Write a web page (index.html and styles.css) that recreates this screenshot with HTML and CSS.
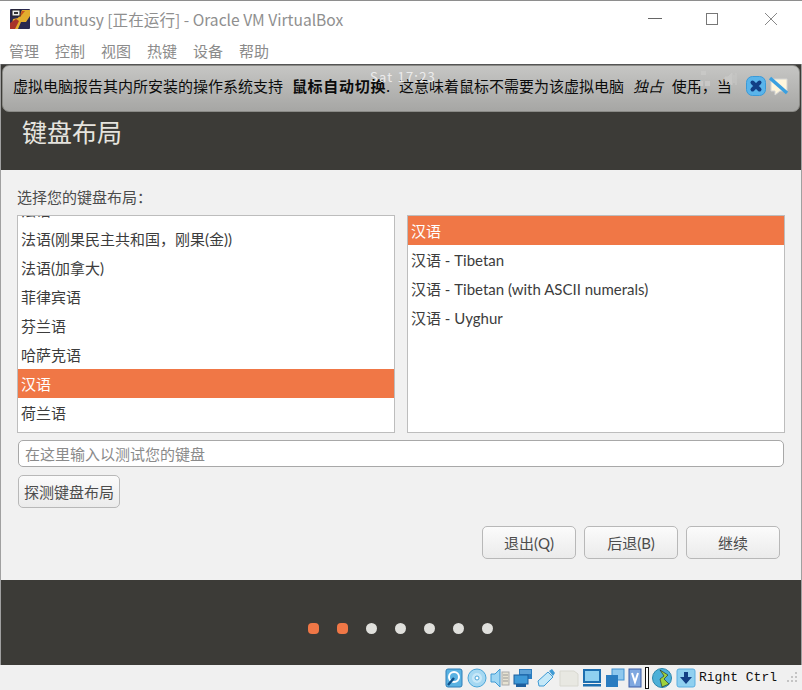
FILE: index.html
```html
<!DOCTYPE html>
<html lang="zh">
<head>
<meta charset="utf-8">
<title>ubuntusy</title>
<link rel="stylesheet" href="styles.css">
</head>
<body>
<div class="window">
  <header class="titlebar">
    <svg class="app-icon" width="20" height="20" viewBox="0 0 20 20">
      <rect width="20" height="20" rx="1" fill="#2a2950"/>
      <path d="M20 1 L12 1 Q10 6 8 9 L3 10 L1 20 L8 20 L11 13 L16 13 L20 7Z" fill="#e3ad2e"/>
      <path d="M0 14 L6 10 L9 12 L5 20 L0 20Z" fill="#a8332a"/>
      <path d="M12 2 L15 2 L10 8 L9 8Z" fill="#c9541e"/>
      <rect x="2" y="1" width="8" height="6" fill="#eee" stroke="#222"/>
      <rect x="4" y="3" width="4" height="2" fill="#333"/>
    </svg>
    <span class="title">ubuntusy [正在运行] - Oracle VM VirtualBox</span>
    <div class="winctl">
      <svg class="win-min" width="14" height="14" viewBox="0 0 14 14"><path d="M0 6.5H14" stroke="#666" fill="none"/></svg>
      <svg width="14" height="14" viewBox="0 0 14 14"><rect x="1.5" y="1.5" width="11" height="11" stroke="#777" fill="none"/></svg>
      <svg width="14" height="14" viewBox="0 0 14 14"><path d="M1 1L13 13M13 1L1 13" stroke="#888" fill="none"/></svg>
    </div>
  </header>
  <nav class="menubar">
    <span>管理</span><span>控制</span><span>视图</span><span>热键</span><span>设备</span><span>帮助</span>
  </nav>
  <main class="guest">
    <div class="guest-top">
      <h1>键盘布局</h1>
    </div>
    <div class="notice">
      <span class="notice-text">虚拟电脑报告其内所安装的操作系统支持 <b>鼠标自动切换</b>. 这意味着鼠标不需要为该虚拟电脑 <i>独占</i> 使用，当</span>
      <span class="panel-ghost clock">Sat 17:23</span>
      <svg class="ghost-net" width="14" height="18" viewBox="0 0 14 18"><path d="M4 1H9V5H4ZM1 11H6V16H1ZM8 11H13V16H8Z" fill="#c8c8c6"/></svg>
      <svg class="ghost-snd" width="14" height="14" viewBox="0 0 14 14"><path d="M1 5H4L8 1V13L4 9H1ZM10 3V11M12 1V13" stroke="#c8c8c6" fill="#c8c8c6"/></svg>
      <svg class="close-ico" width="20" height="20" viewBox="0 0 20 20">
        <rect x="0.5" y="0.5" width="19" height="19" rx="6" fill="#5ab4ea" stroke="#3a9ad8"/>
        <path d="M6.5 6.5L13.5 13.5M13.5 6.5L6.5 13.5" stroke="#123f86" stroke-width="4" stroke-linecap="round"/>
      </svg>
      <svg class="nomouse-ico" width="20" height="20" viewBox="0 0 20 20">
        <path d="M2 3H18V15H11L6 19V15H2Z" fill="#fff6dc" stroke="#d4d4d4"/>
        <path d="M1 2L18 17" stroke="#3aa0e0" stroke-width="3.4"/>
      </svg>
    </div>
    <section class="content">
      <label class="prompt">选择您的键盘布局：</label>
      <div class="lists">
        <ul class="list list-left">
          <li>法语</li>
          <li>法语(刚果民主共和国，刚果(金))</li>
          <li>法语(加拿大)</li>
          <li>菲律宾语</li>
          <li>芬兰语</li>
          <li>哈萨克语</li>
          <li class="sel">汉语</li>
          <li>荷兰语</li>
        </ul>
        <ul class="list list-right">
          <li class="sel">汉语</li>
          <li>汉语 - Tibetan</li>
          <li>汉语 - Tibetan (with ASCII numerals)</li>
          <li>汉语 - Uyghur</li>
        </ul>
      </div>
      <div class="testinput">在这里输入以测试您的键盘</div>
      <div class="detect-row"><button class="btn detect">探测键盘布局</button></div>
      <div class="actions">
        <button class="btn act">退出(Q)</button>
        <button class="btn act">后退(B)</button>
        <button class="btn act">继续</button>
      </div>
    </section>
    <footer class="progress">
      <i class="dot on"></i><i class="dot on"></i><i class="dot"></i><i class="dot"></i><i class="dot"></i><i class="dot"></i><i class="dot"></i>
    </footer>
  </main>
  <div class="statusbar">
    <svg width="20" height="20" viewBox="0 0 20 20"><rect x="2" y="1" width="16" height="18" rx="2" fill="#5ab2e2" stroke="#2f7fb8"/><circle cx="10" cy="9" r="5" fill="none" stroke="#fff" stroke-width="2"/><path d="M4 17L10 10" stroke="#0d4f88" stroke-width="2.4"/></svg>
    <svg width="20" height="20" viewBox="0 0 20 20"><circle cx="10" cy="10" r="9" fill="#a5d8f2" stroke="#4aa5d8"/><circle cx="10" cy="10" r="5" fill="#c8e8f8"/><circle cx="10" cy="10" r="2" fill="#fff" stroke="#4aa5d8"/></svg>
    <svg width="20" height="20" viewBox="0 0 20 20"><path d="M1 6H5L10 1V19L5 14H1Z" fill="#9fd6f3" stroke="#3f9ad4"/><rect x="12" y="4" width="7" height="13" fill="#e6e2d2" stroke="#aaa"/><path d="M13 7H18M13 10H18M13 13H18" stroke="#999"/></svg>
    <svg width="20" height="20" viewBox="0 0 20 20"><rect x="6" y="1" width="13" height="10" fill="#2a7cc0"/><path d="M7 3H18M7 5H18" stroke="#8fc8ee"/><rect x="1" y="7" width="14" height="9" fill="#3f9ad8" stroke="#1d5f9e"/><rect x="3" y="16" width="10" height="3" fill="#1d5f9e"/></svg>
    <svg width="20" height="20" viewBox="0 0 20 20"><path d="M2 13L12 4L17 9L8 18L3 18Z" fill="#c4e8f8" stroke="#3f9ad4"/><path d="M13 3L16 1L19 5L17 8Z" fill="#3f9ad4"/></svg>
    <svg width="20" height="20" viewBox="0 0 20 20"><path d="M1 3H15L19 6V18H1Z" fill="#e8e8e2" stroke="#d8d8d0"/></svg>
    <svg width="20" height="20" viewBox="0 0 20 20"><rect x="2" y="2" width="16" height="12" fill="#8fd0f0" stroke="#1d6fb0" stroke-width="2"/><rect x="1" y="16" width="18" height="2.5" fill="#1d6fb0"/></svg>
    <svg width="20" height="20" viewBox="0 0 20 20"><rect x="7" y="1" width="12" height="11" fill="#8fc8ee" stroke="#3f8fd0"/><rect x="1" y="7" width="12" height="12" fill="#2a7cc0"/></svg>
    <svg width="14" height="20" viewBox="0 0 14 20"><rect x="1" y="1" width="12" height="18" fill="#7fa8e0" stroke="#3c5fa8"/><path d="M4 5L7 14L10 5" stroke="#fff" stroke-width="2" fill="none"/></svg>
    <span class="sep"></span>
    <svg width="21" height="20" viewBox="0 0 21 20"><circle cx="10" cy="10" r="9.5" fill="#4cb0d8" stroke="#2b86ac"/><path d="M8 2L16 7L12 11L17 16L10 19L8 11L12 8Z" fill="#9ed23c" stroke="#222" stroke-width=".6"/></svg>
    <svg width="20" height="20" viewBox="0 0 20 20"><rect x="1" y="1" width="18" height="18" rx="2" fill="#8fd0f0" stroke="#5aaee0"/><path d="M8 4H12V9H16L10 16L4 9H8Z" fill="#123f86"/></svg>
    <span class="host-key">Right Ctrl</span>
    <svg class="grip" width="11" height="11" viewBox="0 0 11 11"><g fill="#c4c4c4"><rect x="8" y="8" width="2" height="2"/><rect x="4" y="8" width="2" height="2"/><rect x="0" y="8" width="2" height="2"/><rect x="8" y="4" width="2" height="2"/><rect x="4" y="4" width="2" height="2"/><rect x="8" y="0" width="2" height="2"/></g></svg>
  </div>
</div>
</body>
</html>
```
FILE: styles.css
```css
* { box-sizing: border-box; }
html, body { margin: 0; padding: 0; }
body {
  width: 802px;
  height: 690px;
  overflow: hidden;
  background: #f0f0f0;
  font-family: "Noto Sans CJK SC", "Noto Sans", sans-serif;
}
.window {
  width: 802px;
  height: 690px;
  display: flex;
  flex-direction: column;
  border-top: 1px solid #8e8e8e;
  background: #fff;
}
.titlebar {
  height: 39px;
  flex: none;
  display: flex;
  align-items: center;
  padding: 0 0 3px 10px;
  background: #fff;
}
.app-icon { flex: none; margin-right: 5px; }
.title { font-size: 15.6px; color: #8f8f8f; white-space: nowrap; }
.winctl {
  margin-left: auto;
  display: flex;
  gap: 45px;
  padding-right: 24px;
}
.win-min { margin-right: -2px; }
.menubar {
  height: 24px;
  flex: none;
  display: flex;
  gap: 16px;
  padding-left: 9px;
  font-size: 15px;
  color: #8b8b8b;
  line-height: 22px;
  background: #fff;
}
.guest {
  flex: 1;
  min-height: 0;
  position: relative;
  display: flex;
  flex-direction: column;
  background: #f1f1f1;
  border-left: 1px solid #a0a0a0;
  border-right: 1px solid #a0a0a0;
}
.guest-top {
  height: 106px;
  flex: none;
  background: #3c3b37;
  display: flex;
  align-items: flex-end;
  padding: 0 0 23px 21px;
  border-top: 1px solid #555;
}
.guest-top h1 {
  margin: 0;
  font-size: 25px;
  font-weight: 400;
  line-height: 32px;
  color: #e6e4df;
}
.notice {
  position: absolute;
  left: 1px;
  top: 1px;
  width: 798px;
  height: 47px;
  display: flex;
  align-items: center;
  padding: 0 0 6px 10px;
  border-radius: 7px;
  border: 1px solid #8a8a86;
  background: linear-gradient(#c6c6c4, #a6a6a4);
}
.notice-text {
  font-size: 15px;
  color: #0c0c0c;
  white-space: pre;
  word-spacing: 5.5px;
  line-height: 20px;
}
.notice-text b { font-weight: 700; letter-spacing: 0.7px; }
.panel-ghost {
  position: absolute;
  left: 367px;
  top: 1px;
  font-size: 13px;
  color: #ececec;
  letter-spacing: 1.2px;
}
.ghost-net { position: absolute; left: 694px; top: 4px; }
.ghost-snd { position: absolute; left: 721px; top: 6px; }
.close-ico { position: absolute; left: 743px; top: 10px; }
.nomouse-ico { position: absolute; left: 766px; top: 10px; }
.content {
  flex: 1;
  min-height: 0;
  display: flex;
  flex-direction: column;
  padding: 17px 16px 0;
}
.prompt {
  font-size: 15px;
  color: #4c4c4c;
  line-height: 20px;
  margin-bottom: 8px;
}
.lists {
  display: flex;
  gap: 12px;
  height: 218px;
}
.list {
  list-style: none;
  margin: 0;
  padding: 0;
  height: 218px;
  overflow: hidden;
  background: #fff;
  border: 1px solid #bdbdbd;
  color: #3c3c3c;
  font-size: 15px;
  font-family: "Lato", "Noto Sans CJK SC", sans-serif;
}
.list-left { width: 378px; }
.list-right { width: 378px; }
.list li {
  height: 29px;
  line-height: 29px;
  padding-left: 3px;
  white-space: nowrap;
}
.list-left li { line-height: 31px; }
.list-left li:first-child { margin-top: -21px; }
.list-right .sel { margin-bottom: 1px; line-height: 31px; }
.sel { background: #f07746; color: #fff; }
.testinput {
  margin: 7px 1px 0;
  height: 27px;
  border: 1px solid #a8a8a8;
  border-radius: 5px;
  background: #fff;
  font-size: 15px;
  line-height: 25px;
  padding-left: 6px;
  color: #8a8a8a;
}
.detect-row { margin: 8px 1px 0; display: flex; }
.btn {
  font-family: "Lato", "Noto Sans CJK SC", sans-serif;
  font-size: 15px;
  color: #4c4c4c;
  border: 1px solid #b8b8b8;
  border-radius: 5px;
  background: linear-gradient(#fbfbfb, #ebebeb);
  padding: 0;
}
.detect { width: 102px; height: 33px; }
.actions {
  display: flex;
  justify-content: flex-end;
  gap: 8px;
  margin-top: 18px;
  padding-right: 5px;
}
.act { width: 94px; height: 33px; }
.progress {
  height: 85px;
  flex: none;
  background: #3c3b37;
  display: flex;
  justify-content: center;
  align-items: center;
  gap: 18px;
  padding: 11px 2px 0 0;
}
.dot {
  width: 11px;
  height: 11px;
  border-radius: 50%;
  background: #e0e0dc;
}
.dot.on { background: #f07746; border-radius: 4px; }
.statusbar {
  height: 25px;
  flex: none;
  display: flex;
  align-items: center;
  justify-content: flex-end;
  gap: 3px;
  padding-right: 4px;
  background: #f0f0f0;
}
.sep { width: 4px; height: 22px; border: 1px solid #111; background: #fff; }
.host-key {
  font-family: "Liberation Mono", monospace;
  font-size: 13px;
  color: #111;
}
.grip { margin-left: 7px; }
```
